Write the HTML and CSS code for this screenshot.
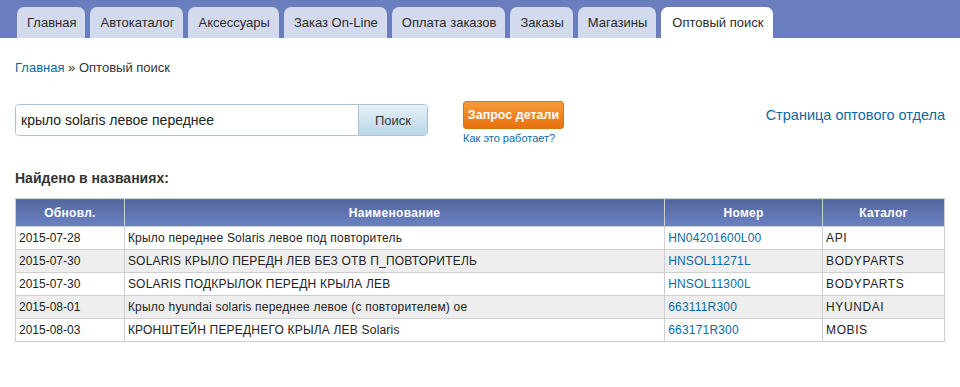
FILE: index.html
```html
<!DOCTYPE html>
<html lang="ru">
<head>
<meta charset="utf-8">
<title>Оптовый поиск</title>
<link rel="stylesheet" href="styles.css">
</head>
<body>
<nav class="tabs">
  <a class="tab" href="#">Главная</a>
  <a class="tab" href="#">Автокаталог</a>
  <a class="tab" href="#">Аксессуары</a>
  <a class="tab" href="#">Заказ On-Line</a>
  <a class="tab" href="#">Оплата заказов</a>
  <a class="tab" href="#">Заказы</a>
  <a class="tab" href="#">Магазины</a>
  <a class="tab active" href="#">Оптовый поиск</a>
</nav>
<main class="content">
  <div class="crumbs"><a href="#">Главная</a> » Оптовый поиск</div>
  <div class="search-row">
    <form class="search">
      <input class="search-input" type="text" value="крыло solaris левое переднее">
      <button class="search-btn" type="button">Поиск</button>
    </form>
    <div class="request">
      <button class="request-btn" type="button">Запрос детали</button>
      <a class="how" href="#">Как это работает?</a>
    </div>
    <a class="wholesale" href="#">Страница оптового отдела</a>
  </div>
  <h2 class="found">Найдено в названиях:</h2>
  <table class="results">
    <colgroup>
      <col class="c-date"><col class="c-name"><col class="c-num"><col class="c-cat">
    </colgroup>
    <thead>
      <tr><th>Обновл.</th><th>Наименование</th><th>Номер</th><th>Каталог</th></tr>
    </thead>
    <tbody>
      <tr><td>2015-07-28</td><td class="name">Крыло переднее Solaris левое под повторитель</td><td class="num"><a href="#">HN04201600L00</a></td><td class="cat">API</td></tr>
      <tr><td>2015-07-30</td><td class="name">SOLARIS КРЫЛО ПЕРЕДН ЛЕВ БЕЗ ОТВ П_ПОВТОРИТЕЛЬ</td><td class="num"><a href="#">HNSOL11271L</a></td><td class="cat">BODYPARTS</td></tr>
      <tr><td>2015-07-30</td><td class="name">SOLARIS ПОДКРЫЛОК ПЕРЕДН КРЫЛА ЛЕВ</td><td class="num"><a href="#">HNSOL11300L</a></td><td class="cat">BODYPARTS</td></tr>
      <tr><td>2015-08-01</td><td class="name">Крыло hyundai solaris переднее левое (с повторителем) ое</td><td class="num"><a href="#">663111R300</a></td><td class="cat">HYUNDAI</td></tr>
      <tr><td>2015-08-03</td><td class="name">КРОНШТЕЙН ПЕРЕДНЕГО КРЫЛА ЛЕВ Solaris</td><td class="num"><a href="#">663171R300</a></td><td class="cat">MOBIS</td></tr>
    </tbody>
  </table>
</main>
</body>
</html>
```

FILE: styles.css
```css
* { box-sizing: border-box; }
body {
  margin: 0;
  font-family: "Liberation Sans", Arial, sans-serif;
  color: #333;
  background: #fff;
}
a { color: #0a6aa8; text-decoration: none; }

.tabs {
  display: flex;
  gap: 5px;
  height: 38px;
  padding: 7px 0 0 17px;
  background: #6a7dbd;
}
.tab {
  display: block;
  height: 31px;
  line-height: 31px;
  padding: 0 9px 0 10px;
  font-size: 13px;
  color: #2b2b2b;
  background: #d4daee;
  border-radius: 7px 7px 0 0;
}
.tab.active { background: #fff; padding: 0 10px 0 11px; }

.content { padding: 0 15px; }

.crumbs {
  font-size: 13px;
  margin-top: 22px;
  line-height: 16px;
  color: #333;
}

.search-row {
  display: flex;
  align-items: flex-start;
  margin-top: 25px;
}
.search {
  display: flex;
  margin: 3px 0 0 0;
  border: 1px solid #a8c3d5;
  border-radius: 4px;
  height: 32px;
  overflow: hidden;
}
.search-input {
  width: 342px;
  height: 30px;
  border: 0;
  padding: 0 5px;
  font-family: inherit;
  font-size: 14px;
  color: #222;
  outline: none;
}
.search-btn {
  width: 69px;
  height: 30px;
  border: 0;
  border-left: 1px solid #a8c3d5;
  background: linear-gradient(#e6f1f8, #b9d6e8);
  font-family: inherit;
  font-size: 13px;
  color: #333;
}
.request {
  display: flex;
  flex-direction: column;
  margin-left: 35px;
}
.request-btn {
  width: 101px;
  height: 28px;
  border: 1px solid #d9770f;
  border-radius: 3px;
  background: linear-gradient(#f79a3a, #e8700f);
  color: #fff;
  font-family: inherit;
  font-weight: bold;
  font-size: 12.5px;
  padding: 0;
}
.how {
  font-size: 11px;
  margin-top: 2px;
  line-height: 14px;
}
.wholesale {
  margin-left: auto;
  font-size: 14.5px;
  margin-top: 6px;
}

.found {
  font-size: 14px;
  font-weight: bold;
  margin: 25px 0 11px;
  color: #333;
  line-height: 17px;
}

.results {
  width: 930px;
  border-collapse: collapse;
  border: 1px solid #cfcfcf;
  box-shadow: 0 1px 3px rgba(0,0,0,0.08);
  font-size: 12px;
}
.c-date { width: 109px; }
.c-name { width: 541px; }
.c-num { width: 158px; }
.c-cat { width: 122px; }
.results th {
  height: 28px;
  color: #fff;
  font-weight: bold;
  text-align: center;
  background: linear-gradient(#52679f, #6c81c1);
  border: 1px solid #cfcfcf;
  letter-spacing: 0.3px;
}
.results td {
  height: 23px;
  padding: 0 3px;
  border: 1px solid #cfcfcf;
  color: #222;
}
.results td.name { letter-spacing: 0.2px; }
.results td.num { letter-spacing: 0.2px; }
.results td.cat { letter-spacing: 0.6px; }
.results tbody tr:nth-child(even) td { background: #eee; }
```
